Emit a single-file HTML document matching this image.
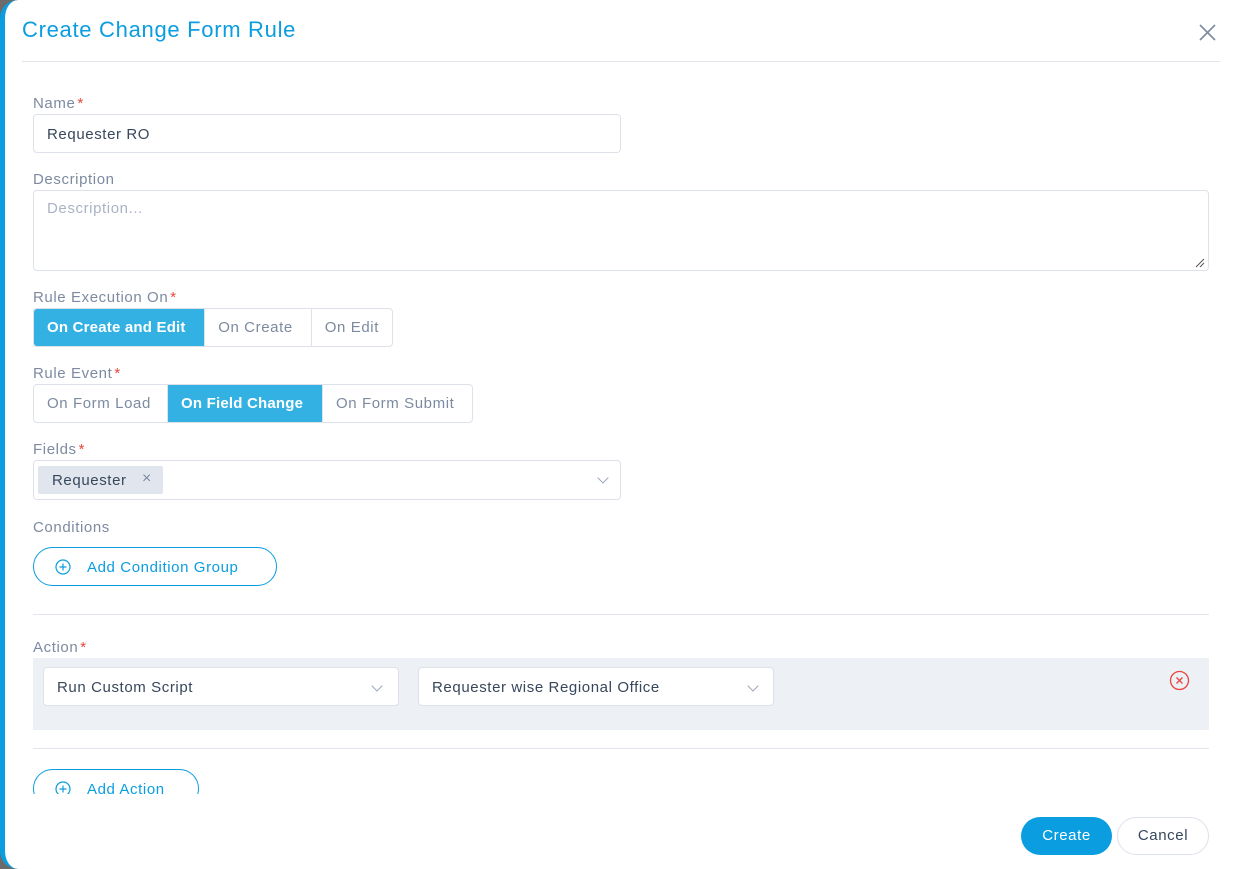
<!DOCTYPE html>
<html><head><style>
*{box-sizing:border-box;margin:0;padding:0}
body{width:1237px;height:869px;background:#6b6b6b;font-family:"Liberation Sans",sans-serif;position:relative;overflow:hidden;letter-spacing:.6px}
.dlg{position:absolute;left:0;top:0;width:1237px;height:869px;background:#fff;border-left:5px solid #0a9de0;border-radius:18px 0 0 18px}
.a{position:absolute}
.lbl{font-size:15px;color:#7d8aa0}
.lbl b{color:#e8453c;font-weight:normal;margin-left:2px}
.inp{border:1px solid #dde2ea;border-radius:4px;background:#fff}
.txt{font-size:15px;color:#38475c}
.grp{display:flex;border:1px solid #dde2ea;border-radius:4px;overflow:hidden;height:39px}
.grp div{padding:0 13px;line-height:38px;font-size:15px;color:#7d8aa0;border-right:1px solid #dde2ea;white-space:nowrap}
.grp div:last-child{border-right:none}
.grp .on{background:#33b1e3;color:#fff;font-weight:bold;letter-spacing:.2px}
.chev{position:absolute;width:8px;height:8px;border-right:1px solid #9aa6b8;border-bottom:1px solid #9aa6b8;transform:rotate(45deg)}
.pill{border:1px solid #0a9de0;border-radius:20px;color:#0a9de0;font-size:15px}
</style></head><body>
<div class="dlg"></div>
<div class="a" style="left:22px;top:17px;font-size:22px;color:#0a9de0;letter-spacing:.7px">Create Change Form Rule</div>
<svg class="a" style="left:1199px;top:24px" width="17" height="17"><path d="M1 1L16 16M16 1L1 16" stroke="#7d8aa0" stroke-width="1.6"/></svg>
<div class="a" style="left:22px;top:61px;width:1198px;height:1px;background:#e2e5ec"></div>

<div class="a lbl" style="left:33px;top:95px">Name<b>*</b></div>
<div class="a inp" style="left:33px;top:114px;width:588px;height:39px"></div>
<div class="a txt" style="left:47px;top:126px">Requester RO</div>

<div class="a lbl" style="left:33px;top:171px">Description</div>
<div class="a inp" style="left:33px;top:190px;width:1176px;height:81px"></div>
<div class="a" style="left:47px;top:200px;font-size:15px;color:#a9b3c4">Description...</div>
<svg class="a" style="left:1195px;top:258px" width="10" height="10"><path d="M9 1L1 9M9 5L5 9" stroke="#555" stroke-width="1"/></svg>

<div class="a lbl" style="left:33px;top:289px">Rule Execution On<b>*</b></div>
<div class="a grp" style="left:33px;top:308px;width:360px"><div class="on" style="width:172px">On Create and Edit</div><div style="width:107px">On Create</div><div style="flex:1">On Edit</div></div>

<div class="a lbl" style="left:33px;top:365px">Rule Event<b>*</b></div>
<div class="a grp" style="left:33px;top:384px;width:440px"><div style="width:134px">On Form Load</div><div class="on" style="width:155px">On Field Change</div><div style="flex:1">On Form Submit</div></div>

<div class="a lbl" style="left:33px;top:441px">Fields<b>*</b></div>
<div class="a inp" style="left:33px;top:460px;width:588px;height:40px"></div>
<div class="a" style="left:38px;top:466px;width:125px;height:28px;background:#e1e6ee;border-radius:2px"></div>
<div class="a txt" style="left:52px;top:472px">Requester</div>
<div class="a" style="left:142px;top:470px;font-size:16px;color:#7d8aa0">×</div>
<div class="chev" style="left:599px;top:474px"></div>

<div class="a lbl" style="left:33px;top:519px">Conditions</div>
<div class="a pill" style="left:33px;top:547px;width:244px;height:39px"></div>
<svg class="a" style="left:55px;top:559px" width="16" height="16"><circle cx="8" cy="8" r="7" fill="none" stroke="#0a9de0" stroke-width="1.2"/><path d="M8 4.5V11.5M4.5 8H11.5" stroke="#0a9de0" stroke-width="1.2"/></svg>
<div class="a" style="left:87px;top:559px;font-size:15px;color:#0a9de0">Add Condition Group</div>

<div class="a" style="left:33px;top:614px;width:1176px;height:1px;background:#e2e5ec"></div>
<div class="a lbl" style="left:33px;top:639px">Action<b>*</b></div>
<div class="a" style="left:33px;top:658px;width:1176px;height:72px;background:#edf0f5"></div>
<div class="a inp" style="left:43px;top:667px;width:356px;height:39px"></div>
<div class="a txt" style="left:57px;top:679px">Run Custom Script</div>
<div class="chev" style="left:373px;top:682px"></div>
<div class="a inp" style="left:418px;top:667px;width:356px;height:39px"></div>
<div class="a txt" style="left:432px;top:679px">Requester wise Regional Office</div>
<div class="chev" style="left:749px;top:682px"></div>
<svg class="a" style="left:1169px;top:670px" width="21" height="21"><circle cx="10.5" cy="10.5" r="9" fill="none" stroke="#e8453c" stroke-width="1.3"/><path d="M7.5 7.5L13.5 13.5M13.5 7.5L7.5 13.5" stroke="#e8453c" stroke-width="1.3"/></svg>

<div class="a" style="left:33px;top:748px;width:1176px;height:1px;background:#e2e5ec"></div>
<div class="a" style="left:33px;top:769px;width:166px;height:25px;overflow:hidden">
<div class="pill" style="width:166px;height:39px"></div></div>
<svg class="a" style="left:55px;top:781px;clip-path:inset(0 0 3px 0)" width="16" height="16"><circle cx="8" cy="8" r="7" fill="none" stroke="#0a9de0" stroke-width="1.2"/><path d="M8 4.5V11.5M4.5 8H11.5" stroke="#0a9de0" stroke-width="1.2"/></svg>
<div class="a" style="left:87px;top:781px;font-size:15px;color:#0a9de0;height:13px;overflow:hidden">Add Action</div>

<div class="a" style="left:1021px;top:817px;width:91px;height:38px;background:#0a9de0;border-radius:19px;color:#fff;font-size:15px;text-align:center;line-height:38px">Create</div>
<div class="a" style="left:1117px;top:817px;width:92px;height:38px;border:1px solid #dde2ea;border-radius:19px;color:#38475c;font-size:15px;text-align:center;line-height:36px">Cancel</div>
</body></html>
